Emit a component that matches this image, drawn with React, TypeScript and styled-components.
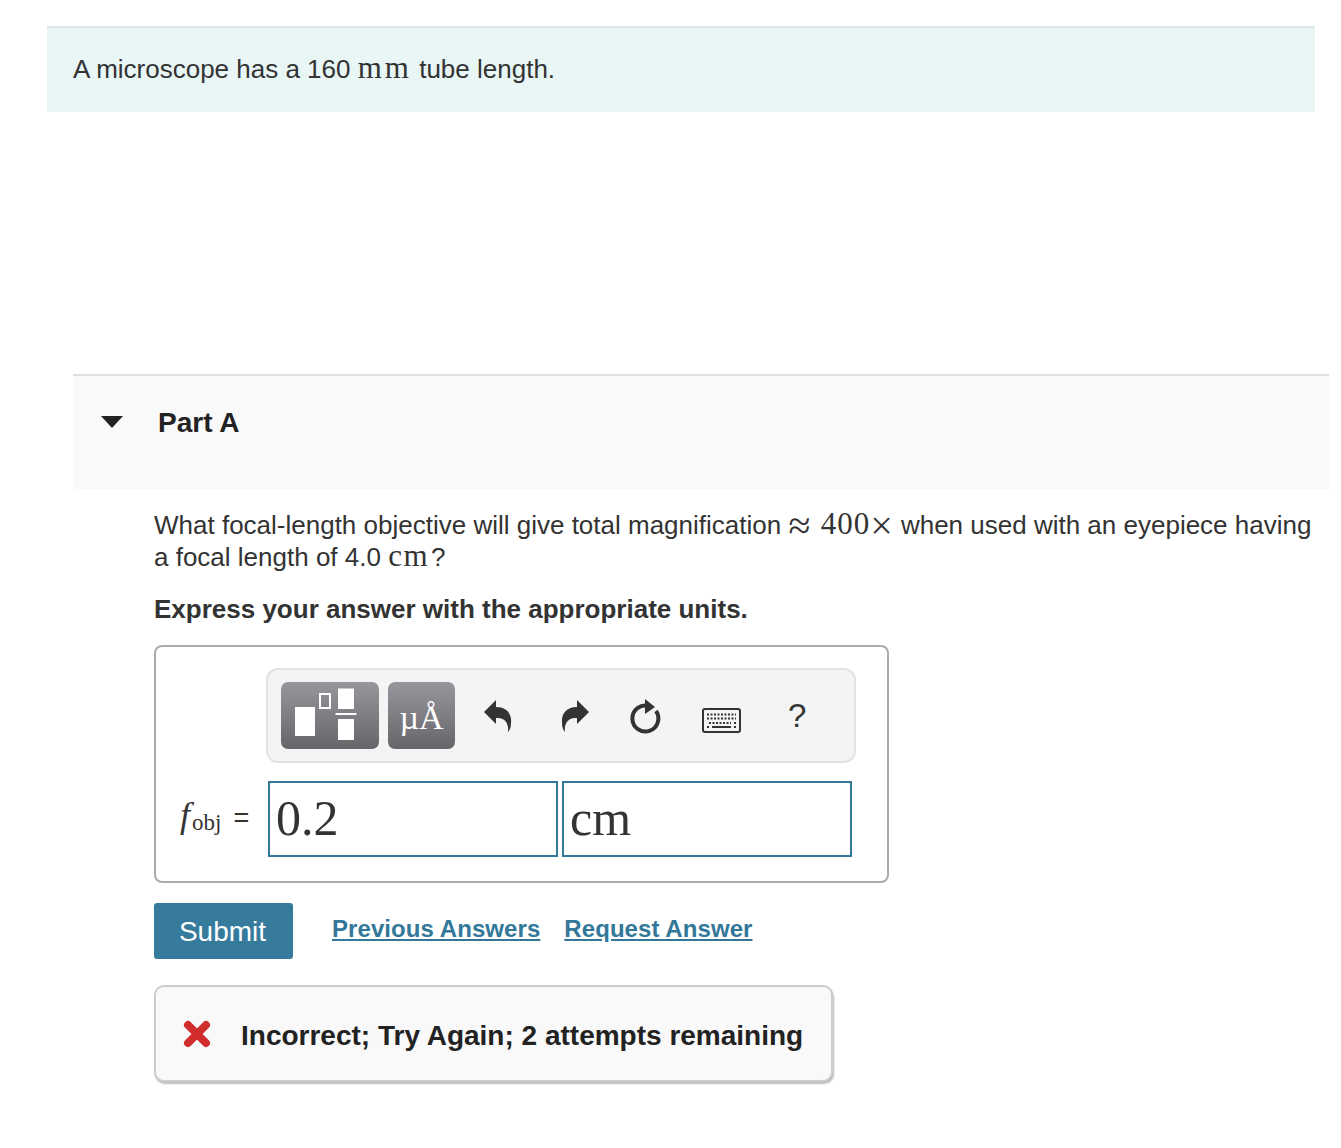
import React from 'react'
import styled, { createGlobalStyle } from 'styled-components'

const GlobalStyle = createGlobalStyle`
  html, body {
    margin: 0;
    padding: 0;
    background: #fff;
    color: #333;
    font-family: 'Liberation Sans', Arial, sans-serif;
  }
`

const Page = styled.div`
  width: 1341px;
  height: 1148px;
  padding-top: 26px;
  box-sizing: border-box;
  overflow: hidden;
`

const Intro = styled.div`
  margin: 0 26px 0 47px;
  height: 86px;
  box-sizing: border-box;
  padding: 25px 26px 0;
  background: #e8f6f6;
  border-top: 2px solid #e0e6e6;
  font-size: 26px;
  line-height: 32px;
`

const Tex = styled.span<{ $spacing?: number; $left?: number; $right?: number }>`
  font-family: 'Liberation Serif', 'Times New Roman', serif;
  font-size: 31px;
  line-height: 0;
  letter-spacing: ${(p) => p.$spacing ?? 0}px;
  margin-left: ${(p) => p.$left ?? 0}px;
  margin-right: ${(p) => p.$right ?? 0}px;
`

const TexSymbol = styled.span<{ $right?: number }>`
  font-family: 'Liberation Serif', 'Times New Roman', serif;
  font-size: 40px;
  line-height: 0;
  vertical-align: -5px;
  margin-right: ${(p) => p.$right ?? 0}px;
`

const PartHeader = styled.div`
  margin: 262px 12px 0 73px;
  height: 115px;
  box-sizing: border-box;
  border-top: 2px solid #e0e0e0;
  background: #f9f9f9;
  display: flex;
  align-items: flex-start;
  padding: 30px 0 0 28px;
`

const Caret = styled.div`
  width: 0;
  height: 0;
  margin-top: 10px;
  border-left: 11px solid transparent;
  border-right: 11px solid transparent;
  border-top: 12px solid #222;
`

const PartTitle = styled.h2`
  margin: 0 0 0 35px;
  font-size: 28px;
  line-height: 34px;
  font-weight: 700;
  color: #222;
`

const Body = styled.div`
  margin-left: 154px;
  padding-top: 20px;
`

const Question = styled.p`
  margin: 0;
  width: 1170px;
  font-size: 26px;
  line-height: 32px;
`

const Instruction = styled.p`
  margin: 20px 0 0;
  font-size: 26px;
  line-height: 32px;
  font-weight: 700;
`

const AnswerBox = styled.div`
  margin-top: 20px;
  width: 735px;
  height: 238px;
  box-sizing: border-box;
  border: 2px solid #aaa;
  border-radius: 8px;
  padding: 21px 0 0 110px;
`

const Toolbar = styled.div`
  width: 590px;
  height: 95px;
  box-sizing: border-box;
  background: #f4f4f4;
  border: 2px solid #e2e2e2;
  border-radius: 12px;
  display: flex;
  align-items: center;
  padding-left: 13px;
`

const TemplateButton = styled.div<{ $width: number }>`
  width: ${(p) => p.$width}px;
  height: 67px;
  margin-right: 9px;
  border-radius: 7px;
  background: linear-gradient(#97969c, #66666a);
  display: flex;
  align-items: center;
  justify-content: center;
  color: #fff;
  font-family: 'Liberation Serif', serif;
`

const MicroLabel = styled.span`
  font-size: 34px;
  line-height: 67px;
  margin-top: 4px;
`

const ToolIcon = styled.svg<{ $left: number; $top?: number }>`
  margin-left: ${(p) => p.$left}px;
  margin-top: ${(p) => p.$top ?? 0}px;
  flex: none;
`

const HelpMark = styled.span`
  margin-left: 47px;
  font-size: 33px;
  color: #333;
`

const InputRow = styled.div`
  display: flex;
  align-items: center;
  margin: 18px 0 0 -86px;
`

const Label = styled.div`
  width: 88px;
  margin-top: -8px;
  display: flex;
  align-items: baseline;
  font-family: 'Liberation Serif', serif;
  font-size: 34px;
`

const FLetter = styled.i`
  font-size: 36px;
`

const Sub = styled.span`
  font-size: 23px;
  margin-left: 2px;
  position: relative;
  top: 3px;
`

const Equals = styled.span`
  font-family: 'Liberation Sans', sans-serif;
  font-size: 27px;
  margin-left: 12px;
`

const Field = styled.div`
  width: 290px;
  height: 76px;
  box-sizing: border-box;
  margin-right: 4px;
  border: 2px solid #337899;
  padding-left: 6px;
  font-family: 'Liberation Serif', serif;
  font-size: 50px;
  line-height: 70px;
  color: #333;
`

const Actions = styled.div`
  display: flex;
  align-items: flex-start;
  margin-top: 20px;
`

const SubmitButton = styled.button`
  width: 139px;
  height: 56px;
  border: 0;
  border-radius: 3px;
  background: #367a9c;
  color: #fff;
  font-family: inherit;
  font-size: 28px;
  padding: 2px 2px 0 0;
`

const LinkText = styled.a<{ $left: number }>`
  margin-left: ${(p) => p.$left}px;
  margin-top: 9px;
  font-size: 24px;
  line-height: 34px;
  font-weight: 700;
  color: #337899;
  text-decoration: underline;
  letter-spacing: 0.07px;
`

const Feedback = styled.div`
  margin-top: 26px;
  width: 679px;
  height: 97px;
  box-sizing: border-box;
  border: 2px solid #ccc;
  border-radius: 10px;
  background: #f9f9f9;
  box-shadow: 1px 2px 2px #bbb;
  display: flex;
  align-items: center;
  padding-left: 27px;
  font-size: 28px;
  font-weight: 700;
  color: #222;
`

const FeedbackText = styled.span`
  margin: 4px 0 0 30px;
`

export default function App() {
  return (
    <Page>
      <GlobalStyle />
      <Intro>
        A microscope has a 160 <Tex $spacing={3}>mm</Tex> tube length.
      </Intro>

      <PartHeader>
        <Caret />
        <PartTitle>Part A</PartTitle>
      </PartHeader>

      <Body>
        <Question>
          What focal-length objective will give total magnification <TexSymbol>≈</TexSymbol>{' '}
          <Tex $spacing={1} $left={3}>400</Tex>
          <TexSymbol $right={1}>×</TexSymbol> when used with an eyepiece having a focal length of 4.0{' '}
          <Tex $spacing={1.5} $right={2}>cm</Tex>?
        </Question>
        <Instruction>Express your answer with the appropriate units.</Instruction>

        <AnswerBox>
          <Toolbar>
            <TemplateButton $width={98}>
              <svg width="98" height="67" viewBox="0 0 98 67">
                <rect x="14" y="25" width="20" height="29" fill="#fff" />
                <rect x="39" y="12" width="10" height="14" fill="none" stroke="#fff" strokeWidth="2" />
                <rect x="57" y="6.5" width="16" height="20.5" fill="#fff" />
                <rect x="54.5" y="31" width="21" height="2" fill="#fff" />
                <rect x="57" y="37" width="16" height="21" fill="#fff" />
              </svg>
            </TemplateButton>
            <TemplateButton $width={67}>
              <MicroLabel>µÅ</MicroLabel>
            </TemplateButton>
            <ToolIcon $left={19} width="32" height="34" viewBox="0 0 32 34">
              <path d="M1 13 L13 1 V8 C24 8 29 15 28 24 C28 28 27 31 25 33 C26 26 23 18 13 19 V25 Z" fill="#333" />
            </ToolIcon>
            <ToolIcon $left={43} width="32" height="34" viewBox="0 0 32 34">
              <path d="M31 13 L19 1 V8 C8 8 3 15 4 24 C4 28 5 31 7 33 C6 26 9 18 19 19 V25 Z" fill="#333" />
            </ToolIcon>
            <ToolIcon $left={38} $top={4} width="34" height="38" viewBox="0 0 34 38">
              <path d="M21 7 A13 13 0 1 0 28 12" fill="none" stroke="#333" strokeWidth="4" />
              <path d="M17 0 L27 8 L17 15 Z" fill="#333" />
            </ToolIcon>
            <ToolIcon $left={40} $top={9} width="39" height="25" viewBox="0 0 39 25">
              <rect x="1" y="1" width="37" height="23" rx="2" fill="#f4f4f4" stroke="#333" strokeWidth="2" />
              <path d="M5 6.5h29M5 10.5h29" stroke="#333" strokeWidth="2" strokeDasharray="2 1.5" />
              <path d="M5 19h2M10 19h19M32 19h2M32 15h2" stroke="#333" strokeWidth="2" />
              <path d="M7 15h22" stroke="#333" strokeWidth="2" strokeDasharray="2 1.5" />
            </ToolIcon>
            <HelpMark>?</HelpMark>
          </Toolbar>

          <InputRow>
            <Label>
              <FLetter>f</FLetter>
              <Sub>obj</Sub>
              <Equals>=</Equals>
            </Label>
            <Field>0.2</Field>
            <Field>cm</Field>
          </InputRow>
        </AnswerBox>

        <Actions>
          <SubmitButton>Submit</SubmitButton>
          <LinkText $left={39}>Previous Answers</LinkText>
          <LinkText $left={24}>Request Answer</LinkText>
        </Actions>

        <Feedback>
          <svg width="28" height="28" viewBox="0 0 28 28">
            <path d="M5 5 L23 23 M23 5 L5 23" fill="none" stroke="#d12c2c" strokeWidth="8" strokeLinecap="round" />
          </svg>
          <FeedbackText>Incorrect; Try Again; 2 attempts remaining</FeedbackText>
        </Feedback>
      </Body>
    </Page>
  )
}
